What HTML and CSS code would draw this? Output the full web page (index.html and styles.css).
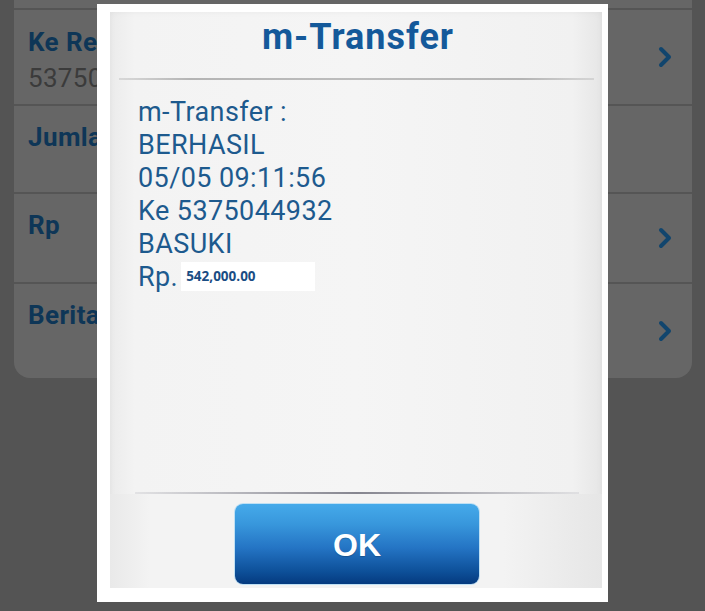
FILE: index.html
```html
<!DOCTYPE html>
<html>
<head>
<meta charset="utf-8">
<link rel="stylesheet" href="styles.css">
</head>
<body>
<div class="screen">
  <div class="card">
    <div class="row row-top"></div>
    <div class="row row-ke">
      <div class="field">
        <div class="label">Ke Rekening</div>
        <div class="value">5375044932</div>
      </div>
      <svg class="chev" viewBox="0 0 14 22"><path d="M3 3 L11 11 L3 19" /></svg>
    </div>
    <div class="row row-jml">
      <div class="field">
        <div class="label">Jumlah</div>
      </div>
    </div>
    <div class="row row-rp">
      <div class="field">
        <div class="label">Rp</div>
      </div>
      <svg class="chev" viewBox="0 0 14 22"><path d="M3 3 L11 11 L3 19" /></svg>
    </div>
    <div class="row row-berita">
      <div class="field">
        <div class="label">Berita</div>
      </div>
      <svg class="chev" viewBox="0 0 14 22"><path d="M3 3 L11 11 L3 19" /></svg>
    </div>
  </div>
</div>

<div class="dialog">
  <div class="panel">
    <div class="title">m-Transfer</div>
    <div class="sep"></div>
    <div class="msg">
      <div>m-Transfer :</div>
      <div>BERHASIL</div>
      <div>05/05 09:11:56</div>
      <div>Ke 5375044932</div>
      <div>BASUKI</div>
      <div class="amount-line">Rp.<span class="amount">542,000.00</span></div>
    </div>
    <div class="sep sep-bottom"></div>
    <div class="footer">
      <div class="ok">OK</div>
    </div>
  </div>
</div>
</body>
</html>
```

FILE: styles.css
```css
* { box-sizing: border-box; }
html, body {
  margin: 0;
  padding: 0;
  width: 705px;
  height: 611px;
  overflow: hidden;
  background: #545454;
  font-family: Roboto, "Liberation Sans", sans-serif;
}
.screen {
  padding-left: 14px;
  padding-right: 13px;
}
.card {
  background: #666666;
  border-radius: 0 0 16px 16px;
  width: 678px;
  overflow: hidden;
}
.row {
  display: flex;
  justify-content: space-between;
  border-bottom: 2px solid #555555;
  padding: 0 20px 0 14px;
}
.row-top { height: 10px; }
.row-ke { height: 96px; }
.row-jml { height: 88px; }
.row-rp { height: 90px; }
.row-berita { height: 94px; border-bottom: none; }
.field {
  align-self: flex-start;
  padding-top: 16px;
}
.row-ke .field { padding-top: 17px; }
.label {
  font-size: 26px;
  line-height: 30px;
  font-weight: 700;
  color: #0e3657;
  letter-spacing: 0.4px;
}
.value {
  font-size: 26px;
  line-height: 36px;
  margin-top: 3px;
  color: #3b3b3b;
  letter-spacing: 0.3px;
}
.chev {
  align-self: center;
  width: 14px;
  height: 22px;
  fill: none;
  stroke: #11456d;
  stroke-width: 4;
  stroke-linecap: round;
  stroke-linejoin: round;
}

.dialog {
  position: absolute;
  left: 97px;
  top: 4px;
  width: 511px;
  height: 598px;
  background: #ffffff;
  padding: 8px 6px 14px 13px;
}
.panel {
  height: 100%;
  background: linear-gradient(90deg, #ebebeb 0%, #f3f3f3 5%, #f5f5f5 50%, #f1f1f1 94%, #e6e6e6 100%);
  box-shadow: inset 0 0 6px rgba(0,0,0,0.05);
  display: flex;
  flex-direction: column;
}
.title {
  height: 66px;
  text-align: center;
  font-size: 36px;
  font-weight: 700;
  line-height: 48px;
  padding-top: 1px;
  padding-left: 4px;
  color: #14599a;
  letter-spacing: 1px;
}
.sep {
  height: 2px;
  margin: 0 8px 0 9px;
  background: linear-gradient(90deg, rgba(160,160,160,0.3), #b4b4b4 15%, #bdbdbd 50%, #b4b4b4 85%, rgba(160,160,160,0.3));
}
.sep-bottom {
  margin: 0 23px 0 25px;
  background: linear-gradient(90deg, rgba(160,160,170,0.2), #a9a9b0 30%, #85858f 50%, #a9a9b0 70%, rgba(160,160,170,0.2));
}
.msg {
  flex: 1;
  padding: 16px 0 0 28px;
  font-size: 27px;
  line-height: 33px;
  color: #1d5a8e;
  letter-spacing: 0.4px;
}
.amount-line {
  display: flex;
  align-items: center;
}
.amount {
  display: inline-block;
  margin-left: 3px;
  margin-top: -2px;
  width: 134px;
  height: 29px;
  background: #ffffff;
  font-family: "Open Sans", "Liberation Sans", sans-serif;
  font-weight: 700;
  font-size: 13.5px;
  line-height: 29px;
  color: #1a4d84;
  padding-left: 5px;
  letter-spacing: 0;
}
.footer {
  height: 94px;
  padding-top: 10px;
  display: flex;
  justify-content: center;
  background: linear-gradient(90deg, #e9e9e9, #f3f3f3 8%, #f3f3f3 80%, #e6e6e6);
}
.ok {
  width: 244px;
  height: 80px;
  margin-left: 2px;
  border-radius: 8px;
  background: linear-gradient(180deg, #45aaea 0%, #3897dc 25%, #2474c4 55%, #0d4f98 85%, #053a7f 100%);
  box-shadow: 0 0 0 1px #bfe0f4;
  color: #ffffff;
  font-family: "Liberation Sans", Arial, sans-serif;
  font-weight: 700;
  font-size: 32px;
  display: flex;
  align-items: center;
  justify-content: center;
  padding-top: 2px;
  text-shadow: 0 1px 1px rgba(0,0,0,0.2);
}
```
